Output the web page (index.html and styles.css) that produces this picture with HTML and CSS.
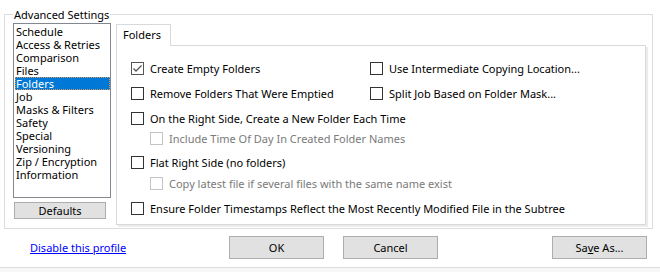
FILE: index.html
```html
<!DOCTYPE html>
<html>
<head>
<meta charset="utf-8">
<link rel="stylesheet" href="styles.css">
</head>
<body>
<div class="dialog">
  <fieldset class="group">
    <legend class="group-title">Advanced Settings</legend>
    <div class="group-body">
      <div class="side">
        <ul class="list">
          <li>Schedule</li>
          <li>Access &amp; Retries</li>
          <li>Comparison</li>
          <li>Files</li>
          <li class="selected">Folders</li>
          <li>Job</li>
          <li>Masks &amp; Filters</li>
          <li>Safety</li>
          <li>Special</li>
          <li>Versioning</li>
          <li>Zip / Encryption</li>
          <li>Information</li>
        </ul>
        <button class="btn btn-defaults">Defaults</button>
      </div>
      <div class="tabs">
        <div class="tab-strip"><div class="tab">Folders</div></div>
        <div class="tab-panel">
          <div class="two-col">
            <label class="row"><span class="cb checked"><svg width="11" height="11" viewBox="0 0 11 11"><polyline points="1.5,5.5 4,8 9.5,2.5" fill="none" stroke="#555" stroke-width="1.3"/></svg></span><span>Create Empty Folders</span></label>
            <label class="row"><span class="cb"></span><span>Use Intermediate Copying Location...</span></label>
            <label class="row r-next"><span class="cb"></span><span>Remove Folders That Were Emptied</span></label>
            <label class="row r-next"><span class="cb"></span><span>Split Job Based on Folder Mask...</span></label>
          </div>
          <label class="row r-next"><span class="cb"></span><span>On the Right Side, Create a New Folder Each Time</span></label>
          <label class="row sub disabled"><span class="cb"></span><span>Include Time Of Day In Created Folder Names</span></label>
          <label class="row r-after-sub"><span class="cb"></span><span>Flat Right Side (no folders)</span></label>
          <label class="row sub sub-tight disabled"><span class="cb"></span><span>Copy latest file if several files with the same name exist</span></label>
          <label class="row r-next"><span class="cb"></span><span>Ensure Folder Timestamps Reflect the Most Recently Modified File in the Subtree</span></label>
        </div>
      </div>
    </div>
  </fieldset>
  <div class="actions">
    <div class="link-cell"><a class="link" href="#">Disable this profile</a></div>
    <button class="btn">OK</button>
    <button class="btn btn-cancel">Cancel</button>
    <button class="btn btn-save">Sa<u>v</u>e As...</button>
  </div>
  <div class="footer"></div>
</div>
</body>
</html>
```

FILE: styles.css
```css
* { box-sizing: border-box; }
html, body {
  margin: 0;
  padding: 0;
  background: #ffffff;
}
body {
  width: 660px;
  height: 272px;
  overflow: hidden;
  font-family: "Noto Sans", "Open Sans", sans-serif;
  font-size: 11px;
  color: #000;
}
.dialog {
  display: flex;
  flex-direction: column;
  height: 272px;
}
.group {
  margin: 6px 7px 0 4px;
  padding: 0 3px 3px 8px;
  border: 1px solid #dcdcdc;
  min-width: 0;
}
.group-title {
  padding: 0 1px;
  line-height: 17px;
  height: 17px;
}
.group-body {
  display: flex;
  gap: 5px;
}
.side {
  width: 98px;
  display: flex;
  flex-direction: column;
}
.list {
  list-style: none;
  margin: 0;
  padding: 1px 0 0 0;
  height: 175px;
  border: 1px solid #828790;
  background: #fff;
}
.list li {
  height: 13px;
  line-height: 13px;
  margin-left: 1px;
  padding-left: 1px;
  white-space: nowrap;
  border: 1px solid transparent;
  border-width: 0;
}
.list li.selected {
  background: #0078d7;
  color: #fff;
  outline: 1px dotted #d99a5a;
  outline-offset: -1px;
}
.btn {
  font-family: inherit;
  font-size: 11px;
  color: #000;
  background: #e1e1e1;
  border: 1px solid #adadad;
  border-radius: 0;
  padding: 0;
  height: 23px;
  width: 95px;
  line-height: 20px;
}
.btn-defaults {
  margin: 4px 0 0 1px;
  width: 92px;
  height: 17px;
  line-height: 15px;
}
.tabs {
  width: 533px;
  display: flex;
  flex-direction: column;
}
.tab-strip {
  display: flex;
  margin-top: 1px;
}
.tab {
  width: 55px;
  height: 22px;
  padding-left: 6px;
  line-height: 19px;
  border: 1px solid #d9d9d9;
  border-bottom: none;
  background: #fff;
  margin-bottom: -1px;
  position: relative;
  z-index: 1;
}
.tab-panel {
  width: 530px;
  height: 180px;
  border: 1px solid #d9d9d9;
  background: #fff;
  box-shadow: 2px 2px 0 #ececec;
  padding: 12px 0 0 14px;
}
.two-col {
  display: grid;
  grid-template-columns: 239px auto;
}
.row {
  display: flex;
  align-items: center;
  gap: 6px;
  height: 20px;
  white-space: nowrap;
}
.r-next { margin-top: 5px; }
.r-after-sub { margin-top: 4px; }
.sub { padding-left: 19px; }
.sub-tight { margin-top: 1px; }
.cb {
  width: 13px;
  height: 13px;
  flex: 0 0 13px;
  border: 1px solid #333;
  background: #fff;
  display: flex;
  align-items: center;
  justify-content: center;
}
.cb.checked { border-color: #555; }
.disabled { color: #7a7a7a; }
.disabled .cb { border-color: #c4c4c4; }
.actions {
  display: flex;
  align-items: center;
  margin-top: 7px;
  padding: 0 13px 0 30px;
  height: 23px;
}
.link-cell {
  width: 199px;
}
.link {
  color: #0000ff;
  text-decoration: underline;
}
.btn-cancel { margin-left: 19px; }
.btn-save { margin-left: auto; }
.footer {
  margin-top: 8px;
  flex: 1;
  border-top: 1px solid #dcdcdc;
  background: #f7f7f7;
}
```
